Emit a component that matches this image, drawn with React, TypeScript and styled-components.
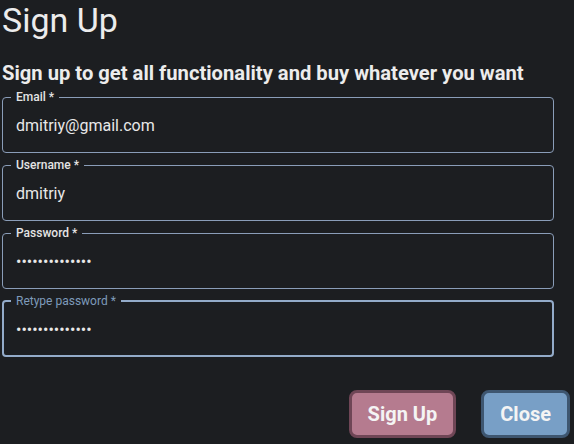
import styled, { createGlobalStyle } from 'styled-components';

const GlobalStyle = createGlobalStyle`
  html, body {
    margin: 0;
    background-color: #1c1e21;
    font-family: Roboto, 'Liberation Sans', sans-serif;
    color: #e6e6e6;
  }
`;

const Page = styled.div`
  width: 574px;
  height: 444px;
  box-sizing: border-box;
  padding: 0 4px 0 2px;
  display: flex;
  flex-direction: column;
`;

const Title = styled.h1`
  margin: 0;
  font-size: 34px;
  font-weight: 400;
  line-height: 40px;
  color: #ececec;
`;

const Subtitle = styled.h2`
  margin: 22px 0 0;
  font-size: 20.2px;
  font-weight: 700;
  line-height: 23px;
  color: #ececec;
`;

const Form = styled.form`
  margin-top: 6px;
  padding-right: 16px;
  display: flex;
  flex-direction: column;
  gap: 6px;
`;

const Fieldset = styled.fieldset<{ $active?: boolean }>`
  margin: 0;
  min-width: 0;
  border: ${p => (p.$active ? 2 : 1)}px solid ${p => (p.$active ? '#93abc9' : '#8a9db8')};
  border-radius: 4px;
  padding: 0 ${p => (p.$active ? 7 : 8)}px ${p => (p.$active ? 3 : 4)}px;
`;

const Legend = styled.legend<{ $active?: boolean }>`
  padding: 0 5px;
  font-size: 12px;
  line-height: 12px;
  font-weight: ${p => (p.$active ? 400 : 500)};
  color: ${p => (p.$active ? '#7e9bbb' : '#e4e4e4')};
`;

const Input = styled.input`
  display: block;
  width: 100%;
  box-sizing: border-box;
  height: 45px;
  padding: 0 5px;
  border: none;
  outline: none;
  background: transparent;
  font-family: Roboto, 'Liberation Sans', sans-serif;
  font-size: 16px;
  color: #e8e8e8;
  caret-color: #f0f0f0;
`;

const Actions = styled.div`
  margin-top: 33px;
  display: flex;
  justify-content: flex-end;
  gap: 25px;
`;

const Button = styled.button<{ $variant: 'primary' | 'secondary' }>`
  height: 48px;
  padding: 0 16px;
  border-radius: 8px;
  border: 3px solid ${p => (p.$variant === 'primary' ? '#6f4656' : '#3e5670')};
  background-color: ${p => (p.$variant === 'primary' ? '#b57b8f' : '#789fc6')};
  color: #f4f4f4;
  font-family: Roboto, 'Liberation Sans', sans-serif;
  font-size: 20px;
  font-weight: 700;
  cursor: pointer;
`;

type FieldProps = {
  label: string;
  value: string;
  type?: string;
  active?: boolean;
};

const Field: React.FC<FieldProps> = ({ label, value, type = 'text', active }) => {
  return (
    <Fieldset $active={active}>
      <Legend $active={active}>{label} *</Legend>
      <Input type={type} defaultValue={value} autoFocus={active} />
    </Fieldset>
  );
};

const App: React.FC = () => {
  return (
    <Page>
      <GlobalStyle />
      <Title>Sign Up</Title>
      <Subtitle>Sign up to get all functionality and buy whatever you want</Subtitle>
      <Form onSubmit={e => e.preventDefault()}>
        <Field label='Email' value='dmitriy@gmail.com' />
        <Field label='Username' value='dmitriy' />
        <Field label='Password' value='dmitriy12345!!' type='password' />
        <Field label='Retype password' value='dmitriy12345!!' type='password' active />
      </Form>
      <Actions>
        <Button $variant='primary'>Sign Up</Button>
        <Button $variant='secondary' type='button'>Close</Button>
      </Actions>
    </Page>
  );
};

export default App;
